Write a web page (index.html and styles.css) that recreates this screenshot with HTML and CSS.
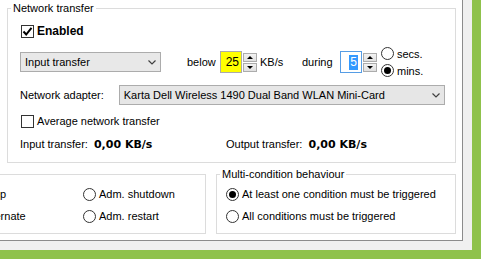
FILE: index.html
```html
<!DOCTYPE html>
<html lang="en">
<head>
    <meta charset="UTF-8">
    <title>Conditions</title>
    <link rel="stylesheet" href="styles.css">
</head>
<body>
    <div class="frame">
        <div class="panel">
            <!-- Network transfer -->
            <fieldset class="group net">
                <legend>Network transfer</legend>
                <div class="check bold">
                    <span class="box"><svg width="11" height="11" viewBox="0 0 11 11"><path d="M1.5 5.5 L4.2 8.5 L9.5 1.8" fill="none" stroke="#000" stroke-width="2"/></svg></span>Enabled
                </div>
                <div class="row limits">
                    <div class="select small">Input transfer<svg class="chev" width="8" height="5" viewBox="0 0 8 5"><path d="M0.5 0.5 L4 4 L7.5 0.5" fill="none" stroke="#404040" stroke-width="1.2"/></svg></div>
                    <span class="below">below</span>
                    <span class="num yellow">25</span>
                    <span class="spin"><span class="btn"><i class="up"></i></span><span class="btn"><i class="down"></i></span></span>
                    <span class="unit">KB/s</span>
                    <span class="during">during</span>
                    <span class="num focus"><span class="sel">5</span></span>
                    <span class="spin"><span class="btn"><i class="up"></i></span><span class="btn"><i class="down"></i></span></span>
                    <div class="radios">
                        <div class="radio"><span class="dot"></span>secs.</div>
                        <div class="radio"><span class="dot on"></span>mins.</div>
                    </div>
                </div>
                <div class="row adapter">
                    <span class="adapter-label">Network adapter:</span>
                    <div class="select big">Karta Dell Wireless 1490 Dual Band WLAN Mini-Card<svg class="chev" width="8" height="5" viewBox="0 0 8 5"><path d="M0.5 0.5 L4 4 L7.5 0.5" fill="none" stroke="#404040" stroke-width="1.2"/></svg></div>
                </div>
                <div class="check avg"><span class="box"></span>Average network transfer</div>
                <div class="row stats">
                    <span class="stat">Input transfer: <b>0,00 KB/s</b></span>
                    <span class="stat">Output transfer: <b>0,00 KB/s</b></span>
                </div>
            </fieldset>

            <div class="row bottom">
                <!-- Actions, mostly scrolled out to the left -->
                <fieldset class="group actions">
                    <legend>Action</legend>
                    <div class="grid">
                        <div class="radio"><span class="dot"></span>Sleep</div>
                        <div class="radio"><span class="dot"></span>Adm. shutdown</div>
                        <div class="radio"><span class="dot"></span>Hibernate</div>
                        <div class="radio"><span class="dot"></span>Adm. restart</div>
                    </div>
                </fieldset>

                <fieldset class="group multi">
                    <legend>Multi-condition behaviour</legend>
                    <div class="radio"><span class="dot on"></span>At least one condition must be triggered</div>
                    <div class="radio second"><span class="dot"></span>All conditions must be triggered</div>
                </fieldset>
            </div>
        </div>
    </div>
</body>
</html>
```

FILE: styles.css
```css
/* Page frame */
body {
    margin: 0;
    overflow: hidden;
    background: #8fc24c; /* green window border */
    font-family: 'Liberation Sans', Arial, sans-serif;
    font-size: 11px;
    color: #000;
}

.frame {
    width: 472px;
    height: 250px;
    background: #f0f0f0;
    overflow: hidden;
}

.panel {
    width: 463px;
    height: 241px;
    box-sizing: border-box;
    background: #fff;
    border-right: 1px solid #8c8c8c;
    border-bottom: 1px solid #8c8c8c;
    padding-top: 1px;
    overflow: hidden;
}

/* Group boxes */
.group {
    margin: 0;
    border: 1px solid #dcdcdc;
    box-sizing: border-box;
    min-width: 0;
}

.group legend {
    padding: 0 2px;
    line-height: 14px;
}

.net {
    margin-left: 7px;
    width: 449px;
    padding: 9px 10px 11px 12px;
}

.net legend {
    margin-left: -9px;
}

.row {
    display: flex;
    align-items: center;
}

/* Check boxes */
.check {
    display: flex;
    align-items: center;
    height: 14px;
}

.check.bold {
    font-weight: bold;
    font-size: 12px;
}

.check .box {
    width: 13px;
    height: 13px;
    box-sizing: border-box;
    border: 1px solid #333;
    background: #fff;
    margin: 0 3px 0 1px;
    display: flex;
    align-items: center;
    justify-content: center;
}

.check.avg {
    margin-top: 9px;
}

/* Transfer limit row */
.limits {
    height: 34px;
    margin-top: 7px;
}

.select {
    height: 20px;
    box-sizing: border-box;
    border: 1px solid #acacac;
    background: #e8e8e8;
    display: flex;
    align-items: center;
    padding-left: 4px;
    justify-content: space-between;
}

.select .chev {
    margin-right: 4px;
}

.select.small {
    width: 141px;
}

.below {
    margin-left: 26px;
    width: 33px;
}

.num {
    width: 22px;
    height: 22px;
    box-sizing: border-box;
    border: 1px solid #ababab;
    display: flex;
    align-items: center;
    justify-content: flex-end;
    padding-right: 2px;
    font-size: 12px;
}

.num.yellow {
    background: #ffff00;
}

.num.focus {
    border-color: #569de5;
    padding-right: 3px;
}

.num .sel {
    background: #3399ff;
    color: #fff;
    line-height: 15px;
    padding: 0 1px;
}

.spin {
    display: flex;
    flex-direction: column;
    gap: 1px;
    margin-left: 1px;
}

.spin .btn {
    width: 14px;
    height: 9px;
    box-sizing: border-box;
    border: 1px solid #acacac;
    background: linear-gradient(#f2f2f2, #e0e0e0);
    display: flex;
    align-items: center;
    justify-content: center;
}

.spin i {
    width: 0;
    height: 0;
    border-left: 3px solid transparent;
    border-right: 3px solid transparent;
}

.spin i.up {
    border-bottom: 3px solid #000;
}

.spin i.down {
    border-top: 3px solid #000;
}

.unit {
    margin-left: 3px;
    width: 42px;
}

.during {
    width: 38px;
}

.radios {
    margin-left: 4px;
    display: flex;
    flex-direction: column;
    gap: 3px;
}

/* Radio buttons */
.radio {
    display: flex;
    align-items: center;
    height: 14px;
    white-space: nowrap;
}

.radio .dot {
    width: 13px;
    height: 13px;
    box-sizing: border-box;
    border: 1px solid #333;
    border-radius: 50%;
    background: #fff;
    margin-right: 3px;
    display: flex;
    align-items: center;
    justify-content: center;
}

.radio .dot.on::after {
    content: "";
    width: 7px;
    height: 7px;
    border-radius: 50%;
    background: #000;
}

/* Adapter row */
.adapter {
    margin-top: 6px;
}

.adapter-label {
    width: 99px;
}

.select.big {
    width: 327px;
    background: #e6e6e6;
}

/* Transfer stats */
.stats {
    margin-top: 9px;
    height: 14px;
}

.stat {
    width: 206px;
}

.stat b {
    font-family: 'DejaVu Sans', Verdana, sans-serif;
    font-size: 11px;
    margin-left: 3px;
}

/* Bottom group boxes */
.bottom {
    margin-top: 4px;
    align-items: flex-start;
}

.actions {
    margin-left: -50px;
    width: 256px;
    padding: 6px 0 10px 11px;
}

.actions legend {
    margin-left: -5px;
}

.grid {
    display: grid;
    grid-template-columns: 121px 121px;
    row-gap: 8px;
}

.multi {
    margin-left: 10px;
    width: 240px;
    padding: 6px 0 10px 9px;
}

.multi legend {
    margin-left: -6px;
}

.multi .second {
    margin-top: 8px;
}
```
